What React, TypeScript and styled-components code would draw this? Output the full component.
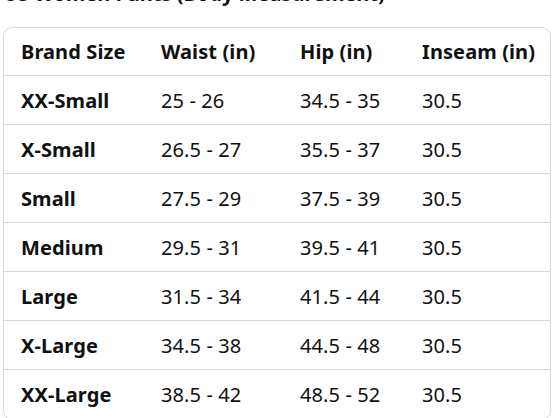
import React from "react";
import styled, { createGlobalStyle } from "styled-components";

const Global = createGlobalStyle`
  html, body { margin: 0; padding: 0; background: #ffffff; }
  body { font-family: "Noto Sans", "Open Sans", Arial, sans-serif; color: #0f1111; }
`;

const Page = styled.div`
  width: 559px;
  height: 418px;
  overflow: hidden;
  padding: 0 8px 0 3px;
  box-sizing: border-box;
`;

const Title = styled.h2`
  margin: -19px 0 0 0;
  font-size: 20px;
  line-height: 26px;
  font-weight: 700;
  white-space: nowrap;
`;

const Card = styled.div`
  margin-top: 20px;
  border: 1px solid #d5d9d9;
  border-radius: 9px;
  overflow: hidden;
`;

const Table = styled.table`
  width: 100%;
  border-collapse: separate;
  border-spacing: 0;
  table-layout: fixed;
`;

const Cell = styled.td<{ $bold?: boolean; $w: number; $head?: boolean }>`
  width: ${(p) => p.$w}px;
  height: ${(p) => (p.$head ? 48 : 49)}px;
  padding: 0 0 0 17px;
  box-sizing: border-box;
  font-size: 20px;
  letter-spacing: 0.1px;
  font-weight: ${(p) => (p.$bold ? 700 : 400)};
  border-bottom: 1px solid #d5d9d9;
  text-align: left;
  vertical-align: middle;
  white-space: nowrap;
`;

const widths = [140, 139, 122, 146];
const header = ["Brand Size", "Waist (in)", "Hip (in)", "Inseam (in)"];
const rows = [
  ["XX-Small", "25 - 26", "34.5 - 35", "30.5"],
  ["X-Small", "26.5 - 27", "35.5 - 37", "30.5"],
  ["Small", "27.5 - 29", "37.5 - 39", "30.5"],
  ["Medium", "29.5 - 31", "39.5 - 41", "30.5"],
  ["Large", "31.5 - 34", "41.5 - 44", "30.5"],
  ["X-Large", "34.5 - 38", "44.5 - 48", "30.5"],
  ["XX-Large", "38.5 - 42", "48.5 - 52", "30.5"],
];

export default function App() {
  return (
    <Page>
      <Global />
      <Title>US Women Pants (Body Measurement)</Title>
      <Card>
        <Table>
          <thead>
            <tr>
              {header.map((h, i) => (
                <Cell as="th" key={h} $bold $head $w={widths[i]}>
                  {h}
                </Cell>
              ))}
            </tr>
          </thead>
          <tbody>
            {rows.map((r) => (
              <tr key={r[0]}>
                {r.map((c, i) => (
                  <Cell key={i} $bold={i === 0} $w={widths[i]}>
                    {c}
                  </Cell>
                ))}
              </tr>
            ))}
          </tbody>
        </Table>
      </Card>
    </Page>
  );
}
